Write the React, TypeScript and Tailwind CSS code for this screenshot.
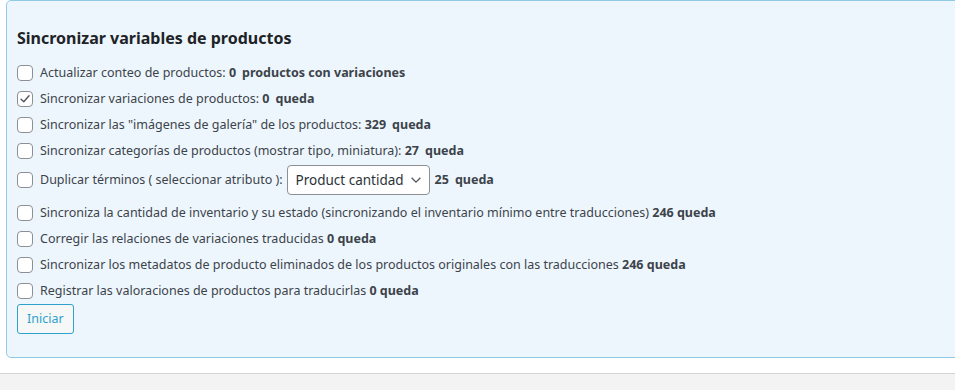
import React, { useState } from "react";

const rows = [
    { label: "Actualizar conteo de productos:", count: "0", tail: "productos con variaciones", checked: false, gap: true },
    { label: "Sincronizar variaciones de productos:", count: "0", tail: "queda", checked: true, gap: true },
    { label: "Sincronizar las \"imágenes de galería\" de los productos:", count: "329", tail: "queda", checked: false, gap: true },
    { label: "Sincronizar categorías de productos (mostrar tipo, miniatura):", count: "27", tail: "queda", checked: false, gap: true },
];

const rowsAfter = [
    { label: "Sincroniza la cantidad de inventario y su estado (sincronizando el inventario mínimo entre traducciones)", count: "246", tail: "queda", checked: false, gap: false },
    { label: "Corregir las relaciones de variaciones traducidas", count: "0", tail: "queda", checked: false, gap: false },
    { label: "Sincronizar los metadatos de producto eliminados de los productos originales con las traducciones", count: "246", tail: "queda", checked: false, gap: false },
    { label: "Registrar las valoraciones de productos para traducirlas", count: "0", tail: "queda", checked: false, gap: false },
];

type Row = (typeof rows)[number];

const Check = ({ checked, onClick }: { checked: boolean; onClick: () => void }) => (
    <span
        onClick={onClick}
        className="w-4 h-4 shrink-0 rounded-[4px] border border-[#8c8f94] bg-white flex items-center justify-center mr-[7px] cursor-pointer"
    >
        {checked && (
            <svg viewBox="0 0 16 16" className="w-[14px] h-[14px]">
                <path d="M3.5 8.2 L6.6 11.2 L12.6 4.2" fill="none" stroke="#50575e" strokeWidth="1.6" strokeLinecap="round" strokeLinejoin="round" />
            </svg>
        )}
    </span>
);

const Line = ({ row }: { row: Row }) => {
    const [checked, setChecked] = useState(row.checked);
    return (
        <div className="flex items-center h-[26px]">
            <Check checked={checked} onClick={() => setChecked(!checked)} />
            <span>
                {row.label} <b className="font-bold">{row.count}</b>
                {row.gap ? <b className="font-bold ml-[6px]">{row.tail}</b> : <b className="font-bold"> {row.tail}</b>}
            </span>
        </div>
    );
};

export default function App() {
    const [dup, setDup] = useState(false);
    return (
        <div
            className="w-full h-[390px] overflow-hidden bg-[#f3f3f3] text-[12.5px] text-[#3c434a]"
            style={{ fontFamily: '"Noto Sans", "Open Sans", sans-serif' }}
        >
            <div className="bg-white pb-[15px] border-b border-[#d5d5d5]">
                <div className="ml-[6px] mr-[-12px] border border-[#8fcbe6] rounded-[5px] bg-[#eef6fd] pl-[10px] pt-[25px] pb-[23px]">
                    <h3 className="text-[16px] font-bold text-[#1d2327] leading-[24px] mb-[10px]">
                        Sincronizar variables de productos
                    </h3>
                    {rows.map((r, i) => (
                        <Line key={i} row={r} />
                    ))}
                    <div className="flex items-center h-[32px] mb-[4px]">
                        <Check checked={dup} onClick={() => setDup(!dup)} />
                        <span className="mr-[4px]">Duplicar términos ( seleccionar atributo ):</span>
                        <div className="h-[30px] w-[143px] flex items-center justify-between border border-[#8c8f94] rounded-[4px] bg-white pl-[8px] pr-[6px] text-[13.5px] text-[#2c3338]">
                            <span>Product cantidad</span>
                            <svg viewBox="0 0 16 16" className="w-[14px] h-[14px]">
                                <path d="M3 5.5 L8 10.5 L13 5.5" fill="none" stroke="#50575e" strokeWidth="1.5" />
                            </svg>
                        </div>
                        <b className="font-bold ml-[5px]">25</b>
                        <b className="font-bold ml-[6px]">queda</b>
                    </div>
                    {rowsAfter.map((r, i) => (
                        <Line key={i} row={r} />
                    ))}
                    <button className="h-[30px] px-[9px] rounded-[3px] border border-[#2ea2cc] bg-[#f6f7f7] text-[#2ea2cc] text-[12.5px]">
                        Iniciar
                    </button>
                </div>
            </div>
        </div>
    );
}
